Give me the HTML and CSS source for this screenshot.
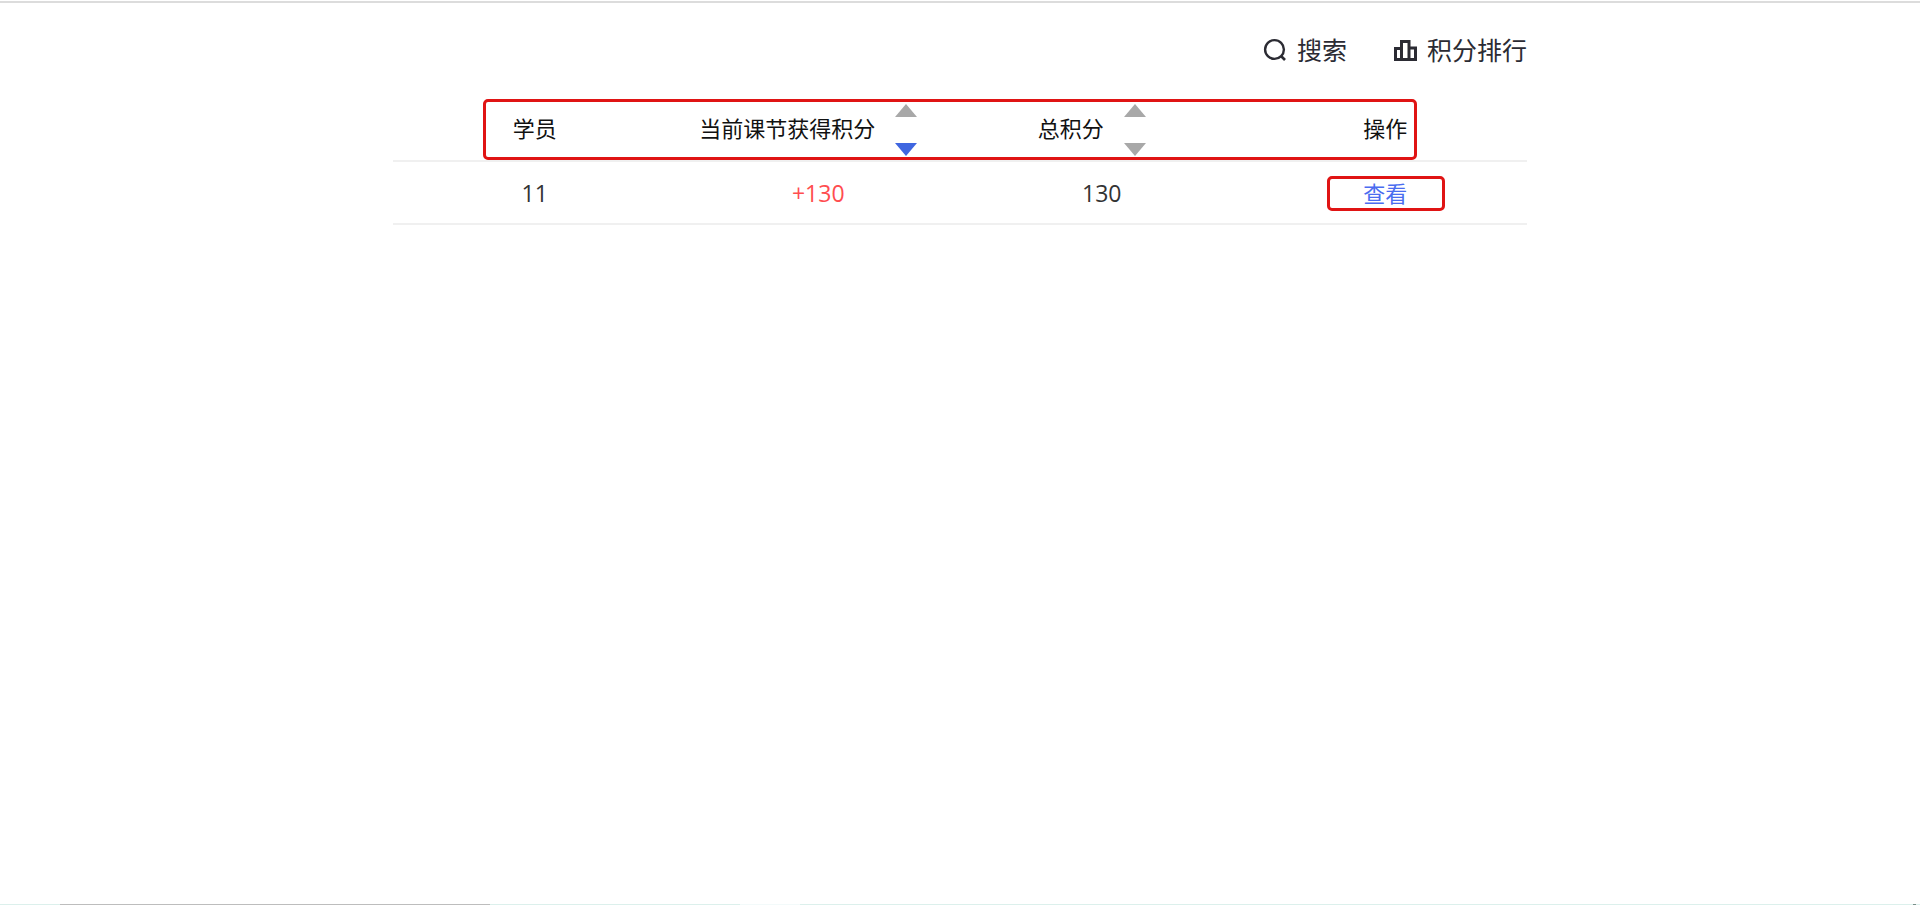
FILE: index.html
```html
<!DOCTYPE html>
<html lang="zh-CN">
<head>
<meta charset="utf-8">
<title>积分</title>
<link rel="stylesheet" href="styles.css">
</head>
<body>
<div class="page">
  <div class="top-rule"></div>
  <main class="content">
    <div class="toolbar">
      <div class="tool">
        <svg class="tool-icon" viewBox="0 0 24 24" width="24" height="24"><circle cx="11.500" cy="11.500" r="9.400" fill="none" stroke="#2b2b33" stroke-width="2.400"/><path d="M18.500 18.500l3.500 3.500" fill="none" stroke="#2b2b33" stroke-width="2.600"/></svg>
        <span>搜索</span>
      </div>
      <div class="tool">
        <svg class="tool-icon" viewBox="0 0 23 21" width="23" height="21"><path d="M1.500 19.500V8.500h6V1.500h7.500v6.500h6.500v11.500z M7.500 8.500v11 M15 8v11.500" fill="none" stroke="#2b2b33" stroke-width="3"/></svg>
        <span>积分排行</span>
      </div>
    </div>
    <div class="table">
      <div class="row head">
        <div class="cell">学员</div>
        <div class="cell">
          <div class="sortable">当前课节获得积分
            <span class="sorter"><i class="tri up"></i><i class="tri down active"></i></span>
          </div>
        </div>
        <div class="cell">
          <div class="sortable">总积分
            <span class="sorter"><i class="tri up"></i><i class="tri down"></i></span>
          </div>
        </div>
        <div class="cell">操作</div>
        <div class="mark mark-head"></div>
      </div>
      <div class="row body">
        <div class="cell num">11</div>
        <div class="cell num plus">+130</div>
        <div class="cell num">130</div>
        <div class="cell link">查看<span class="mark mark-link"></span></div>
      </div>
    </div>
  </main>
  <div class="bottom-strip">
    <span class="seg teal w60"></span>
    <span class="seg gray w430"></span>
    <span class="seg teal w250"></span>
    <span class="seg pale w60"></span>
    <span class="seg teal grow"></span>
    <span class="seg dark w3"></span>
    <span class="seg teal w3b"></span>
  </div>
</div>
</body>
</html>
```

FILE: styles.css
```css
* { box-sizing: border-box; }
html, body { margin: 0; padding: 0; background: #fff; }
body {
  font-family: "Open Sans", "Noto Sans CJK SC", sans-serif;
  color: #333;
}
.page {
  height: 905px;
  display: flex;
  flex-direction: column;
  overflow: hidden;
  padding-top: 1px;
}
.top-rule { height: 2px; background: #dcdcdc; flex: none; }
.content {
  flex: 1;
  width: 1134px;
  margin-left: 393px;
  padding-top: 29px;
}
.toolbar {
  display: flex;
  justify-content: flex-end;
  gap: 47px;
  height: 36px;
  font-size: 25px;
  line-height: 36px;
  color: #2b2b33;
}
.tool { display: flex; align-items: center; gap: 10px; }
.tool-icon { flex: none; }
.table { margin-top: 30px; }
.row {
  display: grid;
  grid-template-columns: repeat(4, 1fr);
  align-items: center;
  position: relative;
  font-size: 22px;
  text-align: center;
  border-bottom: 2px solid #f0f0f0;
}
.head { height: 64px; color: #111; }
.head .cell { padding-bottom: 2px; }
.body { height: 63px; }
.cell { position: relative; line-height: 30px; }
.num { font-size: 23px; }
.sortable {
  display: inline-flex;
  align-items: center;
  gap: 20px;
  padding-right: 20px;
}
.sorter {
  display: flex;
  flex-direction: column;
  justify-content: space-between;
  height: 52px;
  margin-top: 4px;
}
.tri {
  display: block;
  width: 0;
  height: 0;
  border-left: 11px solid transparent;
  border-right: 11px solid transparent;
}
.up { border-bottom: 13px solid #a8a8a8; }
.down { border-top: 13px solid #a8a8a8; }
.down.active { border-top-color: #3f66e0; }
.plus { color: #ff4d4f; }
.link { color: #4a6cf0; }
.mark {
  position: absolute;
  border: 3px solid #e01414;
  border-radius: 5px;
  pointer-events: none;
}
.mark-head { left: 90px; right: 110px; top: 1px; bottom: 0; }
.mark-link { left: 83px; right: 82px; top: -2px; bottom: -3px; }
.bottom-strip { display: flex; height: 1px; flex: none; }
.seg { display: block; height: 100%; }
.teal { background: #dcf0ec; }
.gray { background: #bdbdbd; }
.pale { background: #f3fafa; }
.dark { background: #7c8f8a; }
.w60 { width: 60px; }
.w430 { width: 430px; }
.w250 { width: 250px; }
.w3 { width: 3px; }
.w3b { width: 4px; }
.grow { flex: 1; }
```
